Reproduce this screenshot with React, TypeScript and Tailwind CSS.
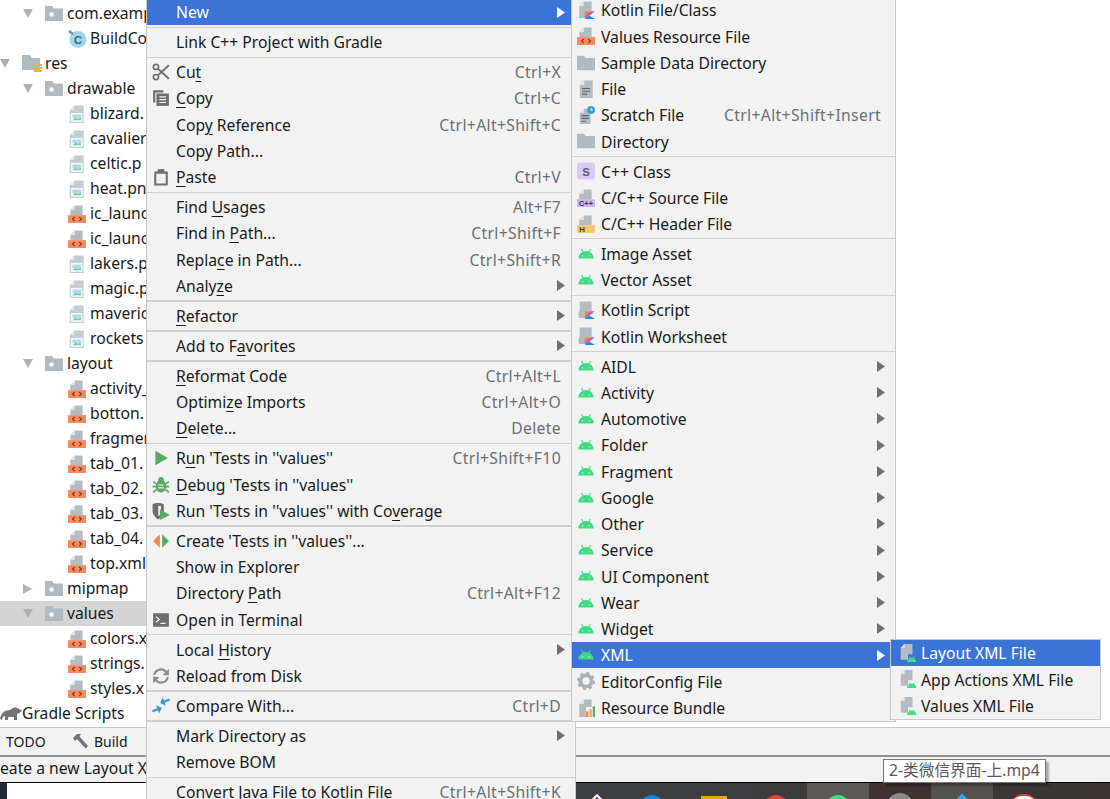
import { Fragment, type ReactNode } from 'react';

const GRAY = '#6e6e6e';

const Svg = ({ children, size = 18 }: { children: ReactNode; size?: number }) => (
  <svg width={size} height={size} viewBox="0 0 16 16" className="shrink-0">
    {children}
  </svg>
);

// shared file silhouette with the cut corner
const Doc = ({ h = 9, x = 2 }: { h?: number; x?: number }) => (
  <g>
    <path d={`M${x + 4} 0.5 H${x + 11} V${h} H${x} V4.5 Z`} fill="#b4bcc2" />
    <path d={`M${x + 4} 0.5 V4.5 H${x} Z`} fill="#e4e6e8" />
  </g>
);

const ArrowDown = () => (
  <svg width="10" height="9" viewBox="0 0 10 9" className="shrink-0">
    <polygon points="0,0 10,0 5,9" fill="#aeb0b2" />
  </svg>
);
const ArrowRight = () => (
  <svg width="9" height="10" viewBox="0 0 9 10" className="shrink-0">
    <polygon points="0,0 9,5 0,10" fill="#aeb0b2" />
  </svg>
);

const FolderDot = () => (
  <svg width="18" height="15" viewBox="0 0 18 15" className="shrink-0">
    <path d="M0 0 H7 L9 2.5 H18 V15 H0 Z" fill="#b0bac1" />
    <circle cx="6.5" cy="8.5" r="2.3" fill="#fff" />
  </svg>
);
const ResFolder = () => (
  <svg width="20" height="18" viewBox="0 0 20 18" className="shrink-0">
    <path d="M0 0 H8 L10 3 H18 V15 H0 Z" fill="#b0bac1" />
    <rect x="12" y="9" width="8" height="2" fill="#e8b04f" />
    <rect x="12" y="12" width="8" height="2" fill="#e8b04f" />
    <rect x="12" y="15" width="8" height="2" fill="#e8b04f" />
  </svg>
);
const PlainFolder = () => (
  <Svg>
    <path d="M0 1.5 H6 L8 3.5 H16 V14.5 H0 Z" fill="#b0bac1" />
  </Svg>
);
const PngFile = () => (
  <Svg>
    <path d="M5.5 0.5 H14 V16 H1.5 V4.5 Z" fill="#c4cbd0" />
    <path d="M5.5 0.5 V4.5 H1.5 Z" fill="#e8eaec" />
    <rect x="2.5" y="7" width="10.5" height="8" fill="#f4f8f7" />
    <rect x="4" y="8.5" width="7.5" height="3" fill="#a9dbee" />
    <path d="M4 13.5 L6.5 11 L9 12.3 L11.5 11 V13.5 Z" fill="#7ccba0" />
  </Svg>
);
const XmlFile = () => (
  <Svg>
    <Doc />
    <rect x="0" y="9" width="16" height="7" fill="#f58a5e" />
    <path d="M6 10.7 L4 12.5 L6 14.3 M10 10.7 L12 12.5 L10 14.3" fill="none" stroke="#7a3d26" strokeWidth="1.1" />
  </Svg>
);
const ClassIcon = () => (
  <svg width="19" height="19" viewBox="0 0 19 19" className="shrink-0">
    <circle cx="10" cy="10.5" r="8.5" fill="#9dd7ee" />
    <path d="M1 2 L5 5" stroke="#7d8a91" strokeWidth="2.4" />
    <text x="10" y="14.5" textAnchor="middle" fontSize="11" fontWeight="700" fill="#44606e" fontFamily="Liberation Sans, sans-serif">C</text>
  </svg>
);
const Elephant = () => (
  <svg width="22" height="14" viewBox="0 0 22 14" className="shrink-0">
    <path d="M0 12 C1 6 5 3 10 3 C12 1 15 0 17 1 C20 2 21 4 22 3 C21 6 19 6 17 7 L17 13 H14 V10 H8 V13 H5 V9 C3 9 2 11 2 13 Z" fill="#6f7478" />
  </svg>
);
const Hammer = () => (
  <svg width="17" height="17" viewBox="0 0 17 17" className="shrink-0">
    <path d="M1 5 L5 1 H9 L7.5 3.5 L16 13 L13.5 15.5 L5 6 L3 8 Z" fill="#6f7478" />
  </svg>
);

const Scissors = () => (
  <Svg>
    <circle cx="3.5" cy="3.5" r="2.3" fill="none" stroke={GRAY} strokeWidth="1.5" />
    <circle cx="3.5" cy="12.5" r="2.3" fill="none" stroke={GRAY} strokeWidth="1.5" />
    <path d="M5.2 5 L15 14 M5.2 11 L15 2" stroke={GRAY} strokeWidth="1.6" />
  </Svg>
);
const CopyIcon = () => (
  <Svg>
    <path d="M1 1 H10 V3 H3 V12 H1 Z" fill={GRAY} />
    <rect x="4" y="4" width="11" height="11" fill={GRAY} />
    <path d="M6.5 7 H12.5 M6.5 9.5 H12.5 M6.5 12 H12.5" stroke="#f2f2f2" strokeWidth="1.1" />
  </Svg>
);
const PasteIcon = () => (
  <Svg>
    <path d="M2 3 H14 V15.5 H2 Z M3.8 5 V13.7 H12.2 V5 Z" fill={GRAY} fillRule="evenodd" />
    <rect x="5" y="1" width="6" height="3.5" fill={GRAY} />
  </Svg>
);
const RunIcon = () => (
  <Svg>
    <polygon points="3,1.5 14,8 3,14.5" fill="#59a869" />
  </Svg>
);
const DebugIcon = () => (
  <Svg>
    <ellipse cx="8" cy="9" rx="4.6" ry="5.6" fill="#59a869" />
    <circle cx="8" cy="3.5" r="2.6" fill="#59a869" />
    <path d="M1 5 L4 7 M15 5 L12 7 M0.5 9.5 H4 M15.5 9.5 H12 M1 14.5 L4 12 M15 14.5 L12 12" stroke="#59a869" strokeWidth="1.5" />
    <path d="M5.5 8 H10.5 M5.5 10.5 H10.5" stroke="#f2f2f2" strokeWidth="1" />
  </Svg>
);
const CoverageIcon = () => (
  <Svg>
    <path d="M0.5 2 C3 0.5 8 0.5 10.5 2 V8 C10.5 11 8 14 5.5 15.5 C3 14 0.5 11 0.5 8 Z" fill={GRAY} />
    <path d="M5.5 3.5 H8 V12 H5.5 Z" fill="#f2f2f2" />
    <polygon points="7,6.5 16,11.5 7,16" fill="#59a869" />
  </Svg>
);
const CreateIcon = () => (
  <Svg>
    <polygon points="7,2 1,8 7,14" fill="#f0894a" />
    <polygon points="9,2 15,8 9,14" fill="#59a869" />
  </Svg>
);
const TerminalIcon = () => (
  <Svg>
    <rect x="1" y="2" width="14" height="12" fill={GRAY} />
    <path d="M3.5 5 L6.5 7.5 L3.5 10" fill="none" stroke="#f2f2f2" strokeWidth="1.1" />
    <path d="M7.5 11 H12" stroke="#f2f2f2" strokeWidth="1.1" />
  </Svg>
);
const ReloadIcon = () => (
  <Svg>
    <path d="M2 7 A6 6 0 0 1 13 5" fill="none" stroke="#8a8e91" strokeWidth="2" />
    <polygon points="15,1.5 15,7.5 9.5,7" fill="#8a8e91" />
    <path d="M14 9 A6 6 0 0 1 3 11" fill="none" stroke="#8a8e91" strokeWidth="2" />
    <polygon points="1,14.5 1,8.5 6.5,9" fill="#8a8e91" />
  </Svg>
);
const CompareIcon = () => (
  <Svg>
    <path d="M0 10 H5 V7 L9 11 L5 15 V12 H0 Z" fill="#3d9bd8" transform="rotate(-20 5 11)" />
    <path d="M16 5 H11 V8 L7 4 L11 0 V3 H16 Z" fill="#3d9bd8" transform="rotate(-20 11 4)" />
  </Svg>
);

const AndroidHead = () => (
  <g>
    <path d="M1.2 12 A6.8 6.6 0 0 1 14.8 12 Z" fill="#3ddc84" />
    <path d="M4 3.6 L5.6 6.5 M12 3.6 L10.4 6.5" stroke="#3ddc84" strokeWidth="1" />
    <circle cx="5" cy="9.6" r="0.6" fill="#f2f2f2" />
    <circle cx="11" cy="9.6" r="0.6" fill="#f2f2f2" />
  </g>
);
const AndroidIcon = () => (
  <Svg>
    <AndroidHead />
  </Svg>
);
const KotlinMark = () => (
  <g>
    <polygon points="7,9 11.5,9 7,13.5" fill="#f88909" />
    <polygon points="11.5,9 16,9 7,16 7,13.5" fill="#c757bc" />
    <polygon points="11,13 16,16 7,16" fill="#0095d5" />
  </g>
);
const KotlinFile = () => (
  <Svg>
    <path d="M6 0.5 H13 V9 H8 V15 H2 V4.5 Z" fill="#b4bcc2" />
    <path d="M6 0.5 V4.5 H2 Z" fill="#e4e6e8" />
    <KotlinMark />
  </Svg>
);
const KotlinScript = () => (
  <Svg>
    <path d="M2.5 0.5 H13 V9 H8 V15 H2 C1 13 1 11 2 9 C3 6 2 3 2.5 0.5 Z" fill="#b4bcc2" />
    <KotlinMark />
  </Svg>
);
const FileIcon = () => (
  <Svg>
    <path d="M6.5 0.5 H14 V16 H2.5 V4.5 Z" fill="#b4bcc2" />
    <path d="M6.5 0.5 V4.5 H2.5 Z" fill="#e4e6e8" />
    <path d="M4.5 7.5 H11.5 M4.5 10 H11.5 M4.5 12.5 H9" stroke="#5c6166" strokeWidth="1" />
  </Svg>
);
const ScratchIcon = () => (
  <Svg>
    <path d="M6 2.5 H12 V16 H2.5 V6 Z" fill="#b4bcc2" />
    <path d="M6 2.5 V6 H2.5 Z" fill="#e4e6e8" />
    <path d="M4 8.5 H10.5 M4 11 H10.5 M4 13.5 H8" stroke="#5c6166" strokeWidth="1" />
    <circle cx="12.5" cy="3.5" r="3.5" fill="#389fd6" />
    <path d="M12.5 1.8 V3.7 H14" fill="none" stroke="#fff" strokeWidth="0.8" />
  </Svg>
);
const CppClass = () => (
  <Svg>
    <rect x="0" y="0.5" width="16" height="15" rx="2.5" fill="#d9c9f6" />
    <text x="8" y="12" textAnchor="middle" fontSize="10" fontWeight="700" fill="#5a5f6b" fontFamily="Liberation Sans, sans-serif">S</text>
  </Svg>
);
const CppSource = () => (
  <Svg>
    <Doc />
    <rect x="0" y="9" width="16" height="7" fill="#c9b5f0" />
    <text x="8" y="15.2" textAnchor="middle" fontSize="6.6" fontWeight="700" fill="#3b3b50" fontFamily="Liberation Sans, sans-serif">C++</text>
  </Svg>
);
const CppHeader = () => (
  <Svg>
    <Doc />
    <rect x="0" y="9" width="16" height="7" fill="#f5c56f" />
    <text x="4.5" y="15.4" textAnchor="middle" fontSize="7" fontWeight="700" fill="#4a4232" fontFamily="Liberation Sans, sans-serif">H</text>
  </Svg>
);
const GearIcon = () => (
  <Svg>
    <circle cx="8" cy="8" r="5" fill="none" stroke="#aab1b6" strokeWidth="3.4" />
    <circle cx="8" cy="8" r="7" fill="none" stroke="#aab1b6" strokeWidth="2.2" strokeDasharray="2.7 2.8" />
  </Svg>
);
const BundleIcon = () => (
  <Svg>
    <path d="M6 0.5 H13 V7 H8 V16 H2 V4.5 Z" fill="#b4bcc2" />
    <path d="M6 0.5 V4.5 H2 Z" fill="#e4e6e8" />
    <rect x="8" y="11" width="2.2" height="5" fill="#f0894a" />
    <rect x="11" y="9" width="2.2" height="7" fill="#e8b04f" />
    <rect x="14" y="6.5" width="2" height="9.5" fill="#59a869" />
  </Svg>
);
const AndroidFile = () => (
  <Svg>
    <path d="M5 0 H12 V9 H8 V14 H1.5 V3.5 Z" fill="#b4bcc2" />
    <path d="M5 0 V3.5 H1.5 Z" fill="#e4e6e8" />
    <g transform="translate(6.5 8.8) scale(0.6)">
      <AndroidHead />
    </g>
  </Svg>
);

type TreeRow = { label: string; depth: number; icon: ReactNode; arrow?: 'down' | 'right'; selected?: boolean };

const png = <PngFile />;
const xml = <XmlFile />;
const folder = <FolderDot />;

// labels stop where the context menu covers them
const tree: TreeRow[] = [
  { label: 'com.examp', depth: 2, icon: folder, arrow: 'down' },
  { label: 'BuildCo', depth: 3, icon: <ClassIcon /> },
  { label: 'res', depth: 1, icon: <ResFolder />, arrow: 'down' },
  { label: 'drawable', depth: 2, icon: folder, arrow: 'down' },
  { label: 'blizard.', depth: 3, icon: png },
  { label: 'cavalier', depth: 3, icon: png },
  { label: 'celtic.p', depth: 3, icon: png },
  { label: 'heat.pn', depth: 3, icon: png },
  { label: 'ic_launc', depth: 3, icon: xml },
  { label: 'ic_launc', depth: 3, icon: xml },
  { label: 'lakers.p', depth: 3, icon: png },
  { label: 'magic.p', depth: 3, icon: png },
  { label: 'maveric', depth: 3, icon: png },
  { label: 'rockets', depth: 3, icon: png },
  { label: 'layout', depth: 2, icon: folder, arrow: 'down' },
  { label: 'activity_', depth: 3, icon: xml },
  { label: 'botton.', depth: 3, icon: xml },
  { label: 'fragmen', depth: 3, icon: xml },
  { label: 'tab_01.', depth: 3, icon: xml },
  { label: 'tab_02.', depth: 3, icon: xml },
  { label: 'tab_03.', depth: 3, icon: xml },
  { label: 'tab_04.', depth: 3, icon: xml },
  { label: 'top.xml', depth: 3, icon: xml },
  { label: 'mipmap', depth: 2, icon: folder, arrow: 'right' },
  { label: 'values', depth: 2, icon: folder, arrow: 'down', selected: true },
  { label: 'colors.x', depth: 3, icon: xml },
  { label: 'strings.', depth: 3, icon: xml },
  { label: 'styles.x', depth: 3, icon: xml },
];

const ProjectTree = () => (
  <div className="flex-1 min-h-0 pt-px bg-white overflow-hidden text-[15.7px] text-[#1a1a1a]">
    {tree.map((row, i) => (
      <div key={i} className={`w-[146px] h-[25px] flex items-center whitespace-nowrap ${row.selected ? 'bg-[#d4d4d4]' : ''}`}>
        {row.depth === 1 && (
          <Fragment>
            <span className="w-[22px] shrink-0 flex justify-start pl-0"><ArrowDown /></span>
            <span className="w-[23px] shrink-0 flex">{row.icon}</span>
          </Fragment>
        )}
        {row.depth === 2 && (
          <Fragment>
            <span className="w-[45px] shrink-0 flex pl-[23px]">{row.arrow === 'down' ? <ArrowDown /> : <ArrowRight />}</span>
            <span className="w-[22px] shrink-0 flex">{row.icon}</span>
          </Fragment>
        )}
        {row.depth === 3 && <span className="w-[90px] shrink-0 flex pl-[68px]">{row.icon}</span>}
        <span>{row.label}</span>
      </div>
    ))}
    <div className="w-[146px] h-[25px] flex items-center whitespace-nowrap">
      <span className="w-[22px] shrink-0 flex"><Elephant /></span>
      <span>Gradle Scripts</span>
    </div>
  </div>
);

type Item = { label: string; icon?: ReactNode; shortcut?: string; more?: boolean; active?: boolean };
type Section = { items: Item[]; thick?: boolean };

// & marks the mnemonic letter
const Label = ({ text }: { text: string }) => {
  const i = text.indexOf('&');
  if (i < 0) return <span>{text}</span>;
  return (
    <span>
      {text.slice(0, i)}
      <u className="underline decoration-1 underline-offset-[3px]">{text[i + 1]}</u>
      {text.slice(i + 2)}
    </span>
  );
};

const MenuRow = ({ item, iconCol }: { item: Item; iconCol: string }) => (
  <div className={`h-[26.25px] flex items-center whitespace-nowrap pr-[10px] ${item.active ? 'bg-[#3b74d6] text-white' : 'text-[#1a1a1a]'}`}>
    <span className={`shrink-0 flex justify-center ${iconCol}`}>{item.icon}</span>
    <span className="flex-1 pt-[2px]"><Label text={item.label} /></span>
    {item.shortcut && <span className="mr-[4px] pt-[2px] tracking-[0.35px] text-[#6a6f73]">{item.shortcut}</span>}
    {item.more && (
      <svg width="8" height="11" viewBox="0 0 8 11" className="shrink-0">
        <polygon points="0,0 8,5.5 0,11" fill={item.active ? '#ffffff' : '#6e6e6e'} />
      </svg>
    )}
  </div>
);

const Menu = ({ sections, className, iconCol }: { sections: Section[]; className: string; iconCol: string }) => (
  <div className={`absolute bg-[#f2f2f2] border-[#c8c8c8] text-[15.7px] ${className}`}>
    {sections.map((section, i) => (
      <Fragment key={i}>
        {i > 0 && (
          <div className="h-[3.75px] flex flex-col justify-center">
            <div className={`bg-[#cfcfcf] ${section.thick ? 'h-[2px]' : 'h-px'}`} />
          </div>
        )}
        {section.items.map((item) => (
          <MenuRow key={item.label} item={item} iconCol={iconCol} />
        ))}
      </Fragment>
    ))}
  </div>
);

const mainMenu: Section[] = [
  { items: [{ label: 'New', more: true, active: true }] },
  { items: [{ label: 'Link C++ Project with Gradle' }] },
  {
    items: [
      { label: 'Cu&t', icon: <Scissors />, shortcut: 'Ctrl+X' },
      { label: '&Copy', icon: <CopyIcon />, shortcut: 'Ctrl+C' },
      { label: 'Cop&y Reference', shortcut: 'Ctrl+Alt+Shift+C' },
      { label: 'Copy Path...' },
      { label: '&Paste', icon: <PasteIcon />, shortcut: 'Ctrl+V' },
    ],
  },
  {
    items: [
      { label: 'Find &Usages', shortcut: 'Alt+F7' },
      { label: 'Find in &Path...', shortcut: 'Ctrl+Shift+F' },
      { label: 'Repla&ce in Path...', shortcut: 'Ctrl+Shift+R' },
      { label: 'Analy&ze', more: true },
    ],
  },
  { thick: true, items: [{ label: '&Refactor', more: true }] },
  { thick: true, items: [{ label: 'Add to F&avorites', more: true }] },
  {
    thick: true,
    items: [
      { label: '&Reformat Code', shortcut: 'Ctrl+Alt+L' },
      { label: 'Optimi&ze Imports', shortcut: 'Ctrl+Alt+O' },
      { label: '&Delete...', shortcut: 'Delete' },
    ],
  },
  {
    items: [
      { label: "R&un 'Tests in ''values''", icon: <RunIcon />, shortcut: 'Ctrl+Shift+F10' },
      { label: "&Debug 'Tests in ''values''", icon: <DebugIcon /> },
      { label: "Run 'Tests in ''values'' with Co&verage", icon: <CoverageIcon /> },
    ],
  },
  {
    thick: true,
    items: [
      { label: "Create 'Tests in ''values''...", icon: <CreateIcon /> },
      { label: 'Show in Explorer' },
      { label: 'Directory &Path', shortcut: 'Ctrl+Alt+F12' },
      { label: 'Open in Terminal', icon: <TerminalIcon /> },
    ],
  },
  {
    items: [
      { label: 'Local &History', more: true },
      { label: 'Reload from Disk', icon: <ReloadIcon /> },
    ],
  },
  { thick: true, items: [{ label: 'Compare With...', icon: <CompareIcon />, shortcut: 'Ctrl+D' }] },
  {
    thick: true,
    items: [
      { label: 'Mark Directory as', more: true },
      { label: 'Remove BOM' },
    ],
  },
  { items: [{ label: 'Convert Java File to Kotlin File', shortcut: 'Ctrl+Alt+Shift+K' }] },
];

const droid = <AndroidIcon />;

const newMenu: Section[] = [
  {
    items: [
      { label: 'Kotlin File/Class', icon: <KotlinFile /> },
      { label: 'Values Resource File', icon: xml },
      { label: 'Sample Data Directory', icon: <PlainFolder /> },
      { label: 'File', icon: <FileIcon /> },
      { label: 'Scratch File', icon: <ScratchIcon />, shortcut: 'Ctrl+Alt+Shift+Insert' },
      { label: 'Directory', icon: <PlainFolder /> },
    ],
  },
  {
    items: [
      { label: 'C++ Class', icon: <CppClass /> },
      { label: 'C/C++ Source File', icon: <CppSource /> },
      { label: 'C/C++ Header File', icon: <CppHeader /> },
    ],
  },
  {
    items: [
      { label: 'Image Asset', icon: droid },
      { label: 'Vector Asset', icon: droid },
    ],
  },
  {
    items: [
      { label: 'Kotlin Script', icon: <KotlinScript /> },
      { label: 'Kotlin Worksheet', icon: <KotlinScript /> },
    ],
  },
  {
    items: [
      { label: 'AIDL', icon: droid, more: true },
      { label: 'Activity', icon: droid, more: true },
      { label: 'Automotive', icon: droid, more: true },
      { label: 'Folder', icon: droid, more: true },
      { label: 'Fragment', icon: droid, more: true },
      { label: 'Google', icon: droid, more: true },
      { label: 'Other', icon: droid, more: true },
      { label: 'Service', icon: droid, more: true },
      { label: 'UI Component', icon: droid, more: true },
      { label: 'Wear', icon: droid, more: true },
      { label: 'Widget', icon: droid, more: true },
      { label: 'XML', icon: droid, more: true, active: true },
      { label: 'EditorConfig File', icon: <GearIcon /> },
      { label: 'Resource Bundle', icon: <BundleIcon /> },
    ],
  },
];

const xmlMenu: Section[] = [
  {
    items: [
      { label: 'Layout XML File', icon: <AndroidFile />, active: true },
      { label: 'App Actions XML File', icon: <AndroidFile /> },
      { label: 'Values XML File', icon: <AndroidFile /> },
    ],
  },
];

const tiles = [
  { bg: '', icon: <div className="mt-[15px] ml-[28px] w-[20px] h-[20px] rotate-45 bg-[#7a3fa0] border-2 border-white" /> },
  { bg: '', icon: <div className="mt-[12px] mx-auto w-[24px] h-[24px] rounded-full bg-[#1284d8]" /> },
  { bg: '', icon: <div className="mt-[13px] mx-auto w-[26px] h-[20px] bg-[#e6a817]" /> },
  { bg: '', icon: <div className="mt-[12px] mx-auto w-[24px] h-[24px] rounded-full bg-[#d9473b]" /> },
  { bg: 'bg-[#5c5855]', icon: <div className="mt-[12px] mx-auto w-[24px] h-[24px] rounded-full bg-[#3ddc84]" /> },
  { bg: 'bg-[#3d3331]', icon: <div className="mt-[10px] mx-auto w-[26px] h-[26px] rounded-full bg-[#8a8a8a]" /> },
  { bg: 'bg-[#55514f]', icon: <div className="mt-[15px] mx-auto w-[22px] h-[22px] rotate-45 bg-[#3aa0e0]" /> },
  { bg: '', icon: <div className="mt-[11px] mx-auto w-[26px] h-[24px] rounded-full bg-white border-t-2 border-[#d9473b]" /> },
];

export default function App() {
  return (
    <div className="relative w-[1110px] h-[799px] overflow-hidden bg-white font-['Noto_Sans','Noto_Sans_CJK_SC',sans-serif]">
      <div className="h-full flex flex-col">
        <ProjectTree />
        <div className="h-[28px] shrink-0 flex items-center bg-[#f2f2f2] border-t border-[#c9c9c9] text-[14px] text-[#1a1a1a] pl-[6px]">
          <span className="w-[66px]">TODO</span>
          <Hammer />
          <span className="ml-[5px]">Build</span>
        </div>
        <div className="h-[27px] shrink-0 flex items-center pb-px bg-[#f2f2f2] border-t-2 border-[#919191] text-[15.7px] text-[#1a1a1a] whitespace-nowrap">
          <span>eate a new Layout X</span>
        </div>
        <div className="h-[17px] shrink-0 flex border-t border-black overflow-hidden">
          <div className="w-[7px] bg-[#1f2a36]" />
          <div className="w-[552px] bg-white" />
          <div className="flex-1 flex bg-linear-to-r from-[#3d4145] to-[#3a3532]">
            {tiles.map((tile, i) => (
              <div key={i} className={`w-[62px] shrink-0 overflow-hidden ${tile.bg}`}>
                {tile.icon}
              </div>
            ))}
          </div>
        </div>
      </div>

      <Menu sections={mainMenu} iconCol="w-[29px] pr-[2px]" className="left-[146px] top-[-1.125px] w-[430px] border-x" />
      <Menu sections={newMenu} iconCol="w-[29px] pr-[2px]" className="left-[571px] top-[-3.1px] w-[325px] border-x border-b" />
      <Menu sections={xmlMenu} iconCol="w-[30px] pl-[4px]" className="left-[890px] top-[639px] w-[211px] border" />

      <div className="absolute left-[883px] top-[759px] px-[5px] h-[24px] flex items-center bg-white border border-[#767676] shadow-[3px_3px_2px_rgba(0,0,0,0.3)] text-[15.7px] text-[#575757] whitespace-nowrap">
        2-类微信界面-上.mp4
      </div>
    </div>
  );
}
